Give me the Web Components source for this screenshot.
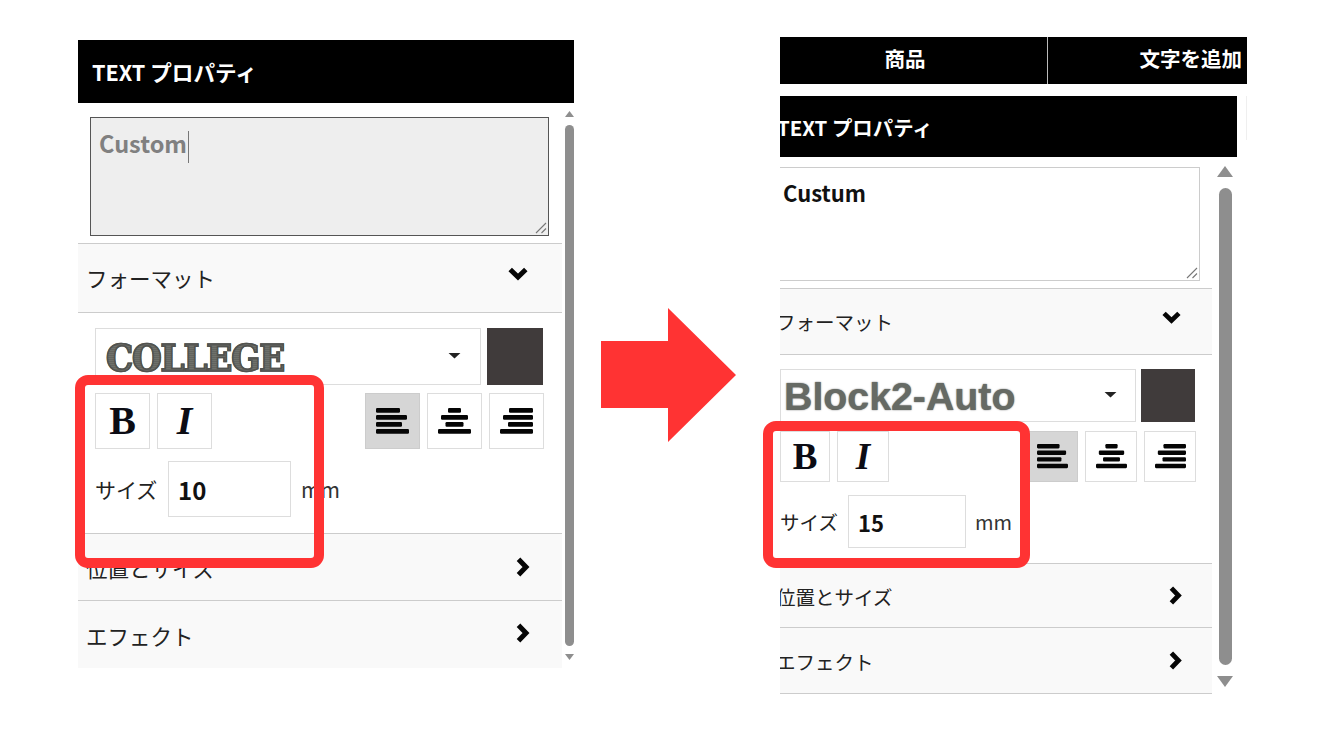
<!DOCTYPE html>
<html lang="ja">
<head>
<meta charset="utf-8">
<title>TEXT プロパティ</title>
<style>
  html, body { margin: 0; background: #fff; }
  body { font-family: "Noto Sans CJK JP", "Noto Sans", sans-serif; color: #222; }

  /* the two screenshots differ a little in scale, so sizes come in through vars */
  prop-panel.before {
    --panel-w: 496px; --panel-top: 40px; --head-w: 496px; --head-h: 63px; --head-pad: 14px; --head-fs: 21.6px;
    --main-w: 484px; --sb-pad: 3px; --sb-top: 8px; --sb-h: 549px; --sb-w: 9px; --sb-thumb: 9px;
    --sb-up: 6px; --sb-gap: 8px;
    --ta-top: 14px; --ta-left: 12px; --ta-w: 459px; --ta-h: 119px; --ta-pad: 8px; --ta-lh: 38px; --ta-fs: 23.5px; --ta-bg: #eee; --ta-bd: #555; --ta-color: #808080; --ta-bl: 1px;
    --row-fs: 21.5px; --row-pad: 8px; --row-right: 32px; --row-down: 34px; --chev: 20px;
    --tools-h: 220px; --tools-top: 15px; --tools-left: 17px; --tools-w: 449px;
    --sel-w: 386px; --sel-h: 57px; --sel-gap: 6px; --sel-pad: 10px; --sw-w: 56px; --gap-a: 8px; --gap-b: 12px;
    --btn-w: 55px; --btn-h: 56px; --btn-gap: 7px; --first-cut: 0px; --b-fs: 40px; --icon-w: 33px;
    --lab-w: 73px; --lab-fs: 21px; --inp-w: 123px; --inp-h: 56px; --inp-fs: 24px; --inp-pad: 9px; --mm-gap: 10px; --mm-fs: 21px;
    --caret-x: 19px;
  }
  prop-panel.after {
    --panel-w: 467px; --panel-top: 37px; --head-w: 457px; --head-h: 61px; --head-pad: 0px; --head-shift: -3px; --head-fs: 20.4px;
    --main-w: 432px; --sb-pad: 5px; --sb-top: 9px; --sb-h: 521px; --sb-w: 16px; --sb-thumb: 13px;
    --sb-up: 11px; --sb-gap: 11px;
    --ta-top: 10px; --ta-left: 0px; --ta-w: 420px; --ta-h: 114px; --ta-pad: 3px; --ta-lh: 36px; --ta-fs: 22px; --ta-bg: #fff; --ta-bd: #ccc; --ta-color: #111; --ta-bl: 0;
    --row-fs: 19.5px; --row-pad: 0px; --row-shift: -4px; --row-right: 30px; --row-down: 31px; --chev: 19px;
    --tools-h: 208px; --tools-top: 14px; --tools-left: 0px; --tools-w: 416px;
    --sel-w: 356px; --sel-h: 53px; --sel-gap: 5px; --sel-pad: 3px; --sw-w: 54px; --gap-a: 9px; --gap-b: 13px;
    --btn-w: 52px; --btn-h: 51px; --btn-gap: 7px; --first-cut: 2px; --b-fs: 37px; --icon-w: 31px;
    --lab-w: 68px; --lab-fs: 19.500px; --inp-w: 118px; --inp-h: 53px; --inp-fs: 22px; --inp-pad: 9px; --mm-gap: 9px; --mm-fs: 20px;
    --caret-x: 18px;
  }

  .college {
    font: bold 38px/1 "DejaVu Serif Condensed", "DejaVu Serif", serif;
    letter-spacing: -1.2px;
    color: transparent;
    background: repeating-linear-gradient(0deg, #62645f 0 1px, #6f716b 1px 2px);
    -webkit-background-clip: text; background-clip: text;
    -webkit-text-stroke: 1.5px #51524f;
  }
  .block2 {
    font: bold 39.3px/1 "Liberation Sans", sans-serif;
    color: #666a64;
    text-shadow: 0 0 1.5px #555;
  }
</style>
</head>
<body>

<slide-page>
  <prop-panel class="before" heading="TEXT プロパティ" text="Custom" caret size="10">
    <span slot="font" class="college">COLLEGE</span>
    <red-highlight style="left:-3px;top:335px;width:229px;height:173px"></red-highlight>
  </prop-panel>

  <red-arrow></red-arrow>

  <prop-panel class="after" heading="TEXT プロパティ" text="Custum" size="15">
    <tab-bar slot="tabs"></tab-bar>
    <span slot="font" class="block2">Block2-Auto</span>
    <red-highlight style="left:-17px;top:384px;width:247px;height:127px"></red-highlight>
  </prop-panel>
</slide-page>

<template id="panel-tpl">
  <style>
    :host { display: block; position: relative; flex: none; box-sizing: border-box; width: var(--panel-w); margin-top: var(--panel-top); }
    .head-wrap { display: flex; gap: 9px; }
    .head {
      flex: none; width: var(--head-w); height: var(--head-h); background: #000; color: #fff; overflow: hidden;
      display: flex; align-items: center; padding-left: var(--head-pad); box-sizing: border-box;
      font-size: var(--head-fs); font-weight: 700; white-space: nowrap;
    }
    .head span { margin-left: var(--head-shift, 0); }
    .stub { width: 1px; height: 44px; background: #efefef; }
    .body { display: flex; }
    .main { width: var(--main-w); flex: none; overflow: hidden; }
    .textbox {
      position: relative; box-sizing: border-box; width: var(--ta-w); height: var(--ta-h);
      margin: var(--ta-top) 0 7px var(--ta-left); padding: 6px var(--ta-pad);
      background: var(--ta-bg); border: 1px solid var(--ta-bd); border-left-width: var(--ta-bl);
      color: var(--ta-color); font-size: var(--ta-fs); font-weight: 700; line-height: var(--ta-lh); white-space: nowrap;
    }
    .caret { display: inline-block; width: 1px; height: 32px; background: #777; vertical-align: middle; margin-left: 1px; }
    .grip { position: absolute; right: 1px; bottom: 1px; }
    .tools {
      box-sizing: border-box; height: var(--tools-h); padding: var(--tools-top) 0 0 var(--tools-left);
      display: flex; flex-direction: column; width: 100%;
    }
    .line { display: flex; width: var(--tools-w); }
    .swatch { width: var(--sw-w); height: var(--sel-h); margin-left: var(--sel-gap); background: #403b3b; flex: none; }
    .btns { margin-top: var(--gap-a); gap: var(--btn-gap); }
    .spring { flex: 1; }
    .b { font: bold var(--b-fs)/1 "Liberation Serif", serif; color: #0c0c14; }
    .i { font: italic bold var(--b-fs)/1 "Liberation Serif", serif; color: #0c0c14; }
    tool-btn[first] { width: calc(var(--btn-w) - var(--first-cut)); }
    .sizes { margin-top: var(--gap-b); align-items: center; }
    .lab { width: var(--lab-w); flex: none; font-size: var(--lab-fs); white-space: nowrap; }
    .inp {
      box-sizing: border-box; width: var(--inp-w); height: var(--inp-h); border: 1px solid #ddd; flex: none;
      display: flex; align-items: center; padding-left: var(--inp-pad);
      font-size: var(--inp-fs); font-weight: 700; color: #111; background: #fff;
    }
    .mm { margin-left: var(--mm-gap); font-size: var(--mm-fs); color: #333; }
  </style>
  <slot name="tabs"></slot>
  <div class="head-wrap">
    <div class="head"><span id="heading"></span></div>
    <div class="stub"></div>
  </div>
  <div class="body">
    <div class="main">
      <div class="textbox"><span id="text"></span><span class="caret" id="caret"></span>
        <svg class="grip" width="12" height="12" viewBox="0 0 12 12"><path d="M1 11 11 1M6.500 11 11 6.500" stroke="#777" stroke-width="1.100" fill="none"/></svg>
      </div>
      <acc-row open underline id="r1">フォーマット</acc-row>
      <div class="tools">
        <div class="line">
          <font-select><slot name="font"></slot></font-select>
          <div class="swatch"></div>
        </div>
        <div class="line btns">
          <tool-btn first><span class="b">B</span></tool-btn>
          <tool-btn><span class="i">I</span></tool-btn>
          <div class="spring"></div>
          <tool-btn active><align-icon kind="left"></align-icon></tool-btn>
          <tool-btn><align-icon kind="center"></align-icon></tool-btn>
          <tool-btn><align-icon kind="right"></align-icon></tool-btn>
        </div>
        <div class="line sizes">
          <div class="lab">サイズ</div>
          <div class="inp" id="size"></div>
          <div class="mm">mm</div>
        </div>
      </div>
      <acc-row id="r2">位置とサイズ</acc-row>
      <acc-row id="r3">エフェクト</acc-row>
    </div>
    <pane-scrollbar></pane-scrollbar>
  </div>
  <slot></slot>
</template>

<script>
  function shadow(el, html) {
    let root = el.attachShadow({ mode: 'open' });
    root.innerHTML = html;
    return root;
  }

  class SlidePage extends HTMLElement {
    connectedCallback() {
      shadow(this, `
        <style>
          :host { display: flex; align-items: flex-start; box-sizing: border-box; width: 1334px; height: 750px; padding-left: 78px; overflow: hidden; }
        </style>
        <slot></slot>`);
    }
  }

  class PropPanel extends HTMLElement {
    connectedCallback() {
      let root = this.attachShadow({ mode: 'open' });
      root.appendChild(document.getElementById('panel-tpl').content.cloneNode(true));
      root.getElementById('heading').textContent = this.getAttribute('heading');
      root.getElementById('text').textContent = this.getAttribute('text');
      root.getElementById('size').textContent = this.getAttribute('size');
      if (!this.hasAttribute('caret')) {
        root.getElementById('caret').remove();
      }
      // row heights differ per screenshot
      let after = this.classList.contains('after');
      let heights = after ? [67, 64, 67] : [70, 67, 68];
      ['r1', 'r2', 'r3'].forEach((id, i) => {
        root.getElementById(id).style.height = heights[i] + 'px';
      });
      if (after) {
        root.getElementById('r3').setAttribute('underline', '');
      } else {
        root.getElementById('r3').style.setProperty('--chev-nudge', '-3px');
      }
    }
  }

  class TabBar extends HTMLElement {
    connectedCallback() {
      shadow(this, `
        <style>
          :host { display: flex; height: 47px; margin-bottom: 12px; background: #000; color: #fff; font-size: 20.5px; font-weight: 700; }
          div { display: flex; align-items: center; box-sizing: border-box; height: 100%; padding-bottom: 6px; white-space: nowrap; }
          .one { width: 268px; justify-content: center; padding-right: 17px; border-right: 1.5px solid #bbb; }
          .two { flex: 1; justify-content: flex-end; padding-right: 5px; }
        </style>
        <div class="one">商品</div>
        <div class="two">文字を追加</div>`);
    }
  }

  class AccRow extends HTMLElement {
    connectedCallback() {
      let open = this.hasAttribute('open');
      shadow(this, `
        <style>
          :host {
            display: flex; align-items: center; justify-content: space-between; box-sizing: border-box;
            background: #f9f9f9; border-top: 1px solid #ccc;
            padding: 0 var(--row-right) 0 var(--row-pad);
            font-size: var(--row-fs); color: #222; white-space: nowrap;
          }
          :host([underline]) { border-bottom: 1px solid #ccc; }
          :host([open]) { padding-right: var(--row-down); }
          .label { margin-left: var(--row-shift, 0); margin-top: 1px; }
          :host([open]) .label { margin-top: -1px; }
          chev-icon { margin-top: var(--chev-nudge, 0); }
          :host([open]) chev-icon { margin-top: -8px; }
        </style>
        <div class="label"><slot></slot></div>
        <chev-icon dir="${open ? 'down' : 'right'}"></chev-icon>`);
    }
  }

  class ChevIcon extends HTMLElement {
    connectedCallback() {
      let down = this.getAttribute('dir') == 'down';
      let path = down ? 'M2.200 2.500 10 10 17.800 2.500' : 'M2.500 2.200 10 10 2.500 17.800';
      let w = down ? 'var(--chev)' : 'calc(var(--chev) * .7)';
      let h = down ? 'calc(var(--chev) * .7)' : 'var(--chev)';
      let box = down ? '0 0 20 14' : '0 0 14 20';
      shadow(this, `
        <style>
          :host { display: block; line-height: 0; }
          svg { width: ${w}; height: ${h}; }
        </style>
        <svg viewBox="${box}"><path d="${path}" fill="none" stroke="#060606" stroke-width="5"/></svg>`);
    }
  }

  class FontSelect extends HTMLElement {
    connectedCallback() {
      shadow(this, `
        <style>
          :host {
            display: flex; align-items: center; position: relative; box-sizing: border-box; flex: none;
            width: var(--sel-w); height: var(--sel-h); border: 1px solid #ddd; overflow: hidden; background: #fff;
            padding-left: var(--sel-pad);
          }
          .text { margin-top: 3px; white-space: nowrap; }
          .caret {
            position: absolute; right: var(--caret-x); top: 50%; margin-top: -4px;
            width: 13px; height: 6px; background: #222;
            clip-path: polygon(0 0, 100% 0, 50% 100%);
          }
        </style>
        <div class="text"><slot></slot></div>
        <div class="caret"></div>`);
    }
  }

  class ToolBtn extends HTMLElement {
    connectedCallback() {
      shadow(this, `
        <style>
          :host {
            display: flex; align-items: center; justify-content: center; box-sizing: border-box; flex: none;
            width: var(--btn-w); height: var(--btn-h); border: 1px solid #ddd; background: #fff;
          }
          :host([active]) { background: #d6d6d6; border-color: #ccc; }
        </style>
        <slot></slot>`);
    }
  }

  class AlignIcon extends HTMLElement {
    connectedCallback() {
      // bar widths were read off the reference, one set per alignment
      let sets = {
        left: [[0, 24], [0, 31], [0, 26], [0, 33]],
        center: [[10, 13], [3, 27], [7.500, 18], [0, 33]],
        right: [[9, 24], [3, 30], [8, 25], [0, 33]]
      };
      let bars = sets[this.getAttribute('kind')].map((b, i) =>
        `<rect x="${b[0]}" y="${i * 7}" width="${b[1]}" height="4.700" rx="1.200"/>`).join('');
      shadow(this, `
        <style>
          :host { display: block; line-height: 0; }
          svg { width: var(--icon-w); height: auto; }
        </style>
        <svg viewBox="0 0 33 25.700" fill="#050505">${bars}</svg>`);
    }
  }

  class PaneScrollbar extends HTMLElement {
    connectedCallback() {
      shadow(this, `
        <style>
          :host {
            display: flex; flex-direction: column; align-items: center; gap: var(--sb-gap); box-sizing: content-box; flex: none;
            width: var(--sb-w); height: var(--sb-h); margin: var(--sb-top) 0 0 var(--sb-pad);
          }
          .arrow { width: 100%; height: var(--sb-up); background: #8e8e8e; flex: none; }
          .up { clip-path: polygon(50% 0, 100% 100%, 0 100%); }
          .down { clip-path: polygon(0 0, 100% 0, 50% 100%); }
          .thumb { width: var(--sb-thumb); flex: 1; background: #8e8e8e; border-radius: 7px; }
        </style>
        <div class="arrow up"></div>
        <div class="thumb"></div>
        <div class="arrow down"></div>`);
    }
  }

  class RedArrow extends HTMLElement {
    connectedCallback() {
      shadow(this, `
        <style>
          :host { display: block; flex: none; width: 135px; height: 134px; margin: 308px 44px 0 27px; line-height: 0; }
        </style>
        <svg width="135" height="134" viewBox="0 0 135 134"><path d="M0 33H67V0L135 67 67 134V100H0Z" fill="#ff3333"/></svg>`);
    }
  }

  class RedHighlight extends HTMLElement {
    connectedCallback() {
      shadow(this, `
        <style>
          :host { display: block; position: absolute; border: 10px solid #ff3333; border-radius: 13px; }
        </style>`);
    }
  }

  customElements.define('slide-page', SlidePage);
  customElements.define('prop-panel', PropPanel);
  customElements.define('tab-bar', TabBar);
  customElements.define('acc-row', AccRow);
  customElements.define('chev-icon', ChevIcon);
  customElements.define('font-select', FontSelect);
  customElements.define('tool-btn', ToolBtn);
  customElements.define('align-icon', AlignIcon);
  customElements.define('pane-scrollbar', PaneScrollbar);
  customElements.define('red-arrow', RedArrow);
  customElements.define('red-highlight', RedHighlight);
</script>
</body>
</html>
